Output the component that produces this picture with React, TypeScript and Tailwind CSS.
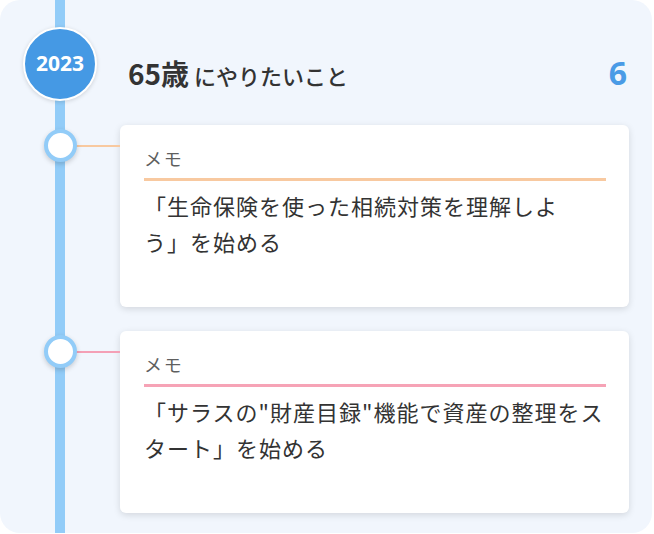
import React from "react";

const FONT = '"Noto Sans CJK JP", "Noto Sans", sans-serif';

type Item = { color: string; lineClass: string; text: string };

const items: Item[] = [
  {
    color: "bg-[#f8c9a0]",
    lineClass: "h-[2px] bg-[#f8c9a0]",
    text: "「生命保険を使った相続対策を理解しよう」を始める",
  },
  {
    color: "bg-[#f6a3b6]",
    lineClass: "h-[1.5px] bg-[#f4a0b6]",
    text: "「サラスの\"財産目録\"機能で資産の整理をスタート」を始める",
  },
];

function Row({ item }: { item: Item }) {
  return (
    <div className="relative flex">
      <div className="relative w-[120px] shrink-0">
        <div className="absolute left-[44px] top-[4px] z-10 h-[33px] w-[33px] rounded-full border-[4px] border-[#92ccf8] bg-white shadow-[0_2px_5px_rgba(0,0,0,0.18)]" />
        <div className={`absolute left-[76px] right-0 top-[20px] ${item.lineClass}`} />
      </div>
      <div className="mr-[23px] h-[182px] flex-1 rounded-[6px] bg-white pl-[24px] pr-[23px] pt-[20px] shadow-[0_2px_7px_rgba(0,0,0,0.13)]">
        <div className="text-[18px] leading-[26px] tracking-[0.1em] text-[#5f5f5f]">メモ</div>
        <div className={`mt-[7px] h-[3px] ${item.color}`} />
        <div className="mt-[6px] w-[459.5px] text-[22px] leading-[36px] tracking-[1px] text-[#333] [text-spacing-trim:space-all]">{item.text}</div>
      </div>
    </div>
  );
}

export default function App() {
  return (
    <div className="h-[534px] w-[654px] bg-white" style={{ fontFamily: FONT }}>
      <div className="relative h-[533px] w-[652px] overflow-hidden rounded-[20px] bg-[#f1f6fd]">
        <div className="absolute bottom-0 left-[55px] top-0 w-[10px] bg-[#92ccf8]" />
        <div className="relative flex flex-col pt-[27px]">
          <div className="flex items-center pr-[25px]">
            <div className="ml-[23px] flex h-[74px] w-[74px] shrink-0 items-center justify-center rounded-full border-[2px] border-white bg-[#4599e4] shadow-[0_1px_4px_rgba(0,0,0,0.15)]">
              <span className="text-[21px] font-bold text-white" style={{ fontFamily: '"Noto Sans", sans-serif' }}>2023</span>
            </div>
            <div className="ml-[31px] flex flex-1 items-baseline pt-[18px] text-[#333]">
              <span className="text-[28px] font-bold">65歳</span>
              <span className="ml-[5px] text-[22px] font-medium">にやりたいこと</span>
            </div>
            <span className="pt-[18px] text-[32px] font-bold text-[#4a9be6]" style={{ fontFamily: '"Noto Sans", sans-serif' }}>6</span>
          </div>
          <div className="mt-[24px] flex flex-col gap-[24px]">
            {items.map((it, i) => (
              <Row key={i} item={it} />
            ))}
          </div>
        </div>
      </div>
    </div>
  );
}
